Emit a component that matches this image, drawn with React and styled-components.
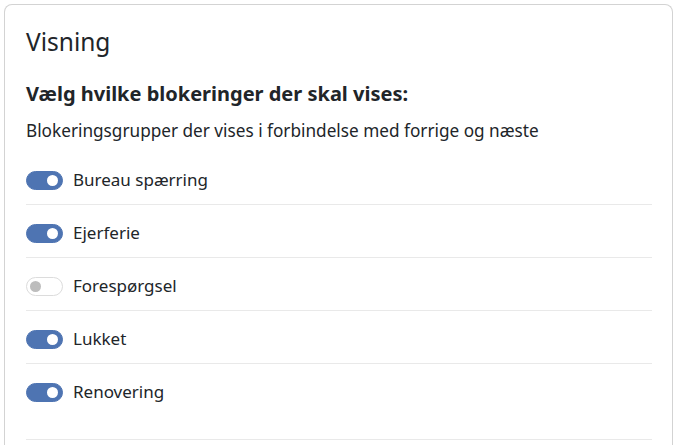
import React, { useState } from "react";
import styled, { createGlobalStyle } from "styled-components";

const Global = createGlobalStyle`
  html, body { margin: 0; padding: 0; background: #fff; }
  body { font-family: "Noto Sans", "Open Sans", sans-serif; color: #212529; }
`;

const Page = styled.div`
  padding: 4px 4px 0 4px;
`;

const Card = styled.section`
  border: 1px solid #d3d3d3;
  border-bottom: none;
  border-radius: 8px 8px 0 0;
  padding: 20px 20px 0 21px;
  min-height: 441px;
  box-sizing: border-box;
`;

const Title = styled.h2`
  margin: 0 0 21px;
  font-size: 24.5px;
  font-weight: 400;
  line-height: 34px;
`;

const Heading = styled.h3`
  margin: 0 0 11px;
  font-size: 20px;
  font-weight: 700;
  line-height: 28px;
`;

const Sub = styled.p`
  margin: 0 0 9px;
  font-size: 17.2px;
  line-height: 24px;
`;

const List = styled.ul`
  list-style: none;
  margin: 0;
  padding: 0;
`;

const Row = styled.li`
  display: flex;
  align-items: center;
  gap: 10px;
  padding: 16px 0 12px;
  border-bottom: ${(p) => (p.$last ? "none" : "1px solid #e9e9e9")};
`;

const Track = styled.button`
  position: relative;
  width: 37px;
  height: 19px;
  border-radius: 10px;
  padding: 0;
  cursor: pointer;
  box-sizing: border-box;
  background: ${(p) => (p.$on ? "#4e74b2" : "#fff")};
  border: 1px solid ${(p) => (p.$on ? "#4e74b2" : "#dcdcdc")};
  &::after {
    content: "";
    position: absolute;
    top: 3px;
    left: ${(p) => (p.$on ? "20px" : "3px")};
    width: 11px;
    height: 11px;
    border-radius: 50%;
    background: ${(p) => (p.$on ? "#fff" : "#bdbdbd")};
  }
`;

const Label = styled.span`
  font-size: 17px;
  line-height: 24px;
`;

const Footer = styled.div`
  margin-top: 23px;
  border-top: 1px solid #e9e9e9;
`;

const items = [
  ["Bureau spærring", true],
  ["Ejerferie", true],
  ["Forespørgsel", false],
  ["Lukket", true],
  ["Renovering", true],
];

export default function App() {
  const [state, setState] = useState(items.map((i) => i[1]));
  return (
    <Page>
      <Global />
      <Card>
        <Title>Visning</Title>
        <Heading>Vælg hvilke blokeringer der skal vises:</Heading>
        <Sub>Blokeringsgrupper der vises i forbindelse med forrige og næste</Sub>
        <List>
          {items.map(([name], i) => (
            <Row key={name} $last={i === items.length - 1}>
              <Track
                $on={state[i]}
                aria-pressed={state[i]}
                onClick={() => setState((s) => s.map((v, j) => (j === i ? !v : v)))}
              />
              <Label>{name}</Label>
            </Row>
          ))}
        </List>
        <Footer />
      </Card>
    </Page>
  );
}
